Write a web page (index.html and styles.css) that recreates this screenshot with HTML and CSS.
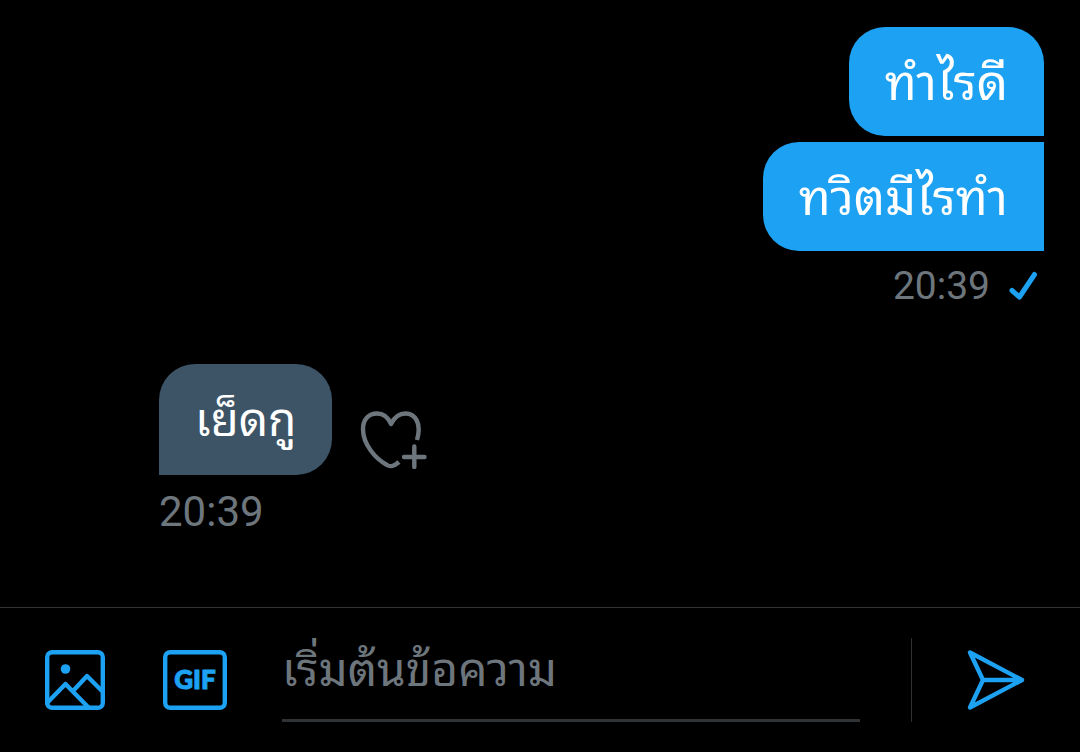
FILE: index.html
```html
<!DOCTYPE html>
<html lang="th">
<head>
  <meta charset="UTF-8">
  <meta name="viewport" content="width=device-width, initial-scale=1">
  <title>ข้อความ</title>
  <link rel="stylesheet" href="styles.css">
</head>
<body>
  <main class="chat">
    <!-- ข้อความที่ส่ง -->
    <div class="group sent">
      <div class="bubble">ทำไรดี</div>
      <div class="bubble bubble-next">ทวิตมีไรทำ</div>
      <div class="meta">
        <time>20:39</time>
        <svg class="check" viewBox="0 0 36 36" stroke-width="5" aria-hidden="true">
          <path d="M4 22.500l7.500 6.500L26.500 6.500"/>
        </svg>
      </div>
    </div>

    <!-- ข้อความที่ได้รับ -->
    <div class="group received">
      <div class="row">
        <div class="bubble">เย็ดกู</div>
        <button class="react" type="button" aria-label="แสดงความรู้สึก">
          <svg viewBox="0 0 72 64" stroke-width="4.400" aria-hidden="true">
            <path d="M57 35C62 18 55 8.500 45.500 8.500C38.500 8.500 34.500 12 31 19C28 12 24 8.500 17 8.500C9 8.500 3 14 3 24C3 40 16 54 27 60C30 62 33 62 39 57"/>
            <path class="plus" d="M54.300 41.500v20.500M44 52h20.500"/>
          </svg>
        </button>
      </div>
      <div class="meta">
        <time>20:39</time>
      </div>
    </div>
  </main>

  <form class="composer">
    <button class="tool" type="button" aria-label="รูปภาพ">
      <svg class="icon-photo" viewBox="0 0 60 60" stroke-width="4.400" aria-hidden="true">
        <rect x="2.200" y="2.200" width="55.600" height="55.600" rx="5"/>
        <circle class="fill" cx="20.500" cy="19" r="4.800"/>
        <path d="M2 53L20.500 34L44 58M28 41L42 26L58 42"/>
      </svg>
    </button>
    <button class="tool" type="button" aria-label="GIF">
      <svg class="icon-gif" viewBox="0 0 64 60" stroke-width="4.400" aria-hidden="true">
        <rect x="2.200" y="2.200" width="59.600" height="55.600" rx="5"/>
        <text class="gif-text" x="32" y="39" text-anchor="middle">GIF</text>
      </svg>
    </button>
    <input class="message-input" type="text" aria-label="ข้อความ" placeholder="เริ่มต้นข้อความ">
    <div class="send-area">
      <button class="tool" type="submit" aria-label="ส่ง">
        <svg class="icon-send" viewBox="0 0 58 60" stroke-width="4.400" aria-hidden="true">
          <path d="M3 2.500L55 30L3 57.500L16 30ZM16 30H55"/>
        </svg>
      </button>
    </div>
  </form>
</body>
</html>
```

FILE: styles.css
```css
* {
  box-sizing: border-box;
}

body {
  margin: 0;
  min-height: 100vh;
  display: flex;
  flex-direction: column;
  background-color: #000;
  color: #fff;
  font-family: Roboto, "Noto Sans Thai Looped", "Noto Looped Thai", Waree, Loma, Garuda, Umpush, sans-serif;
}

button {
  padding: 0;
  border: none;
  background: none;
  cursor: pointer;
}

svg {
  display: block;
  fill: none;
  stroke: #1da1f2;
  stroke-linecap: round;
  stroke-linejoin: round;
}

.chat {
  flex: 1;
  display: flex;
  flex-direction: column;
  gap: 53px;
  padding: 27px 36px 48px 159px;
}

.group {
  display: flex;
  flex-direction: column;
}

.sent {
  align-items: flex-end;
  gap: 6px;
}

.received {
  align-items: flex-start;
  gap: 12px;
}

.row {
  display: flex;
  align-items: flex-end;
  gap: 28px;
}

.bubble {
  padding: 26px 36px 22px;
  font-size: 49px;
  line-height: 61px;
  border-radius: 36px;
}

.sent .bubble {
  background-color: #1da1f2;
  border-bottom-right-radius: 0;
}

.sent .bubble-next {
  border-top-right-radius: 0;
}

.received .bubble {
  padding: 26px 36px 24px;
  background-color: #3d5466;
  font-size: 46px;
  border-bottom-left-radius: 0;
}

.meta {
  display: flex;
  align-items: center;
  gap: 18px;
  color: #6e767d;
  font-size: 39px;
  line-height: 50px;
}

.sent .meta {
  padding-top: 4px;
}

.received .meta {
  font-size: 42px;
}

.check {
  width: 36px;
  height: 36px;
}

.react svg {
  width: 72px;
  height: 64px;
  margin-bottom: 6px;
  stroke: #6e767d;
  stroke-linecap: butt;
}

.react .plus {
  stroke-linecap: round;
}

.composer {
  display: flex;
  align-items: center;
  padding: 30px 55px 30px 45px;
  border-top: 1px solid #2f3336;
}

.icon-photo {
  width: 60px;
  height: 60px;
  margin-right: 58px;
}

.icon-gif {
  width: 64px;
  height: 60px;
  margin-right: 55px;
}

.icon-send {
  width: 58px;
  height: 60px;
}

.fill {
  fill: #1da1f2;
  stroke: none;
}

.gif-text {
  fill: #1da1f2;
  stroke-width: 1px;
  font-family: Lato, sans-serif;
  font-size: 26px;
  font-weight: 900;
}

.message-input {
  flex: 1;
  min-width: 0;
  height: 84px;
  padding: 0 0 18px;
  border: none;
  border-bottom: 3px solid #2f3336;
  background: transparent;
  color: #fff;
  font: inherit;
  font-size: 46px;
  outline: none;
}

.message-input::placeholder {
  color: #6e767d;
  opacity: 1;
}

.send-area {
  display: flex;
  align-items: center;
  height: 84px;
  margin-left: 51px;
  padding-left: 55px;
  border-left: 1px solid #2f3336;
}
```
